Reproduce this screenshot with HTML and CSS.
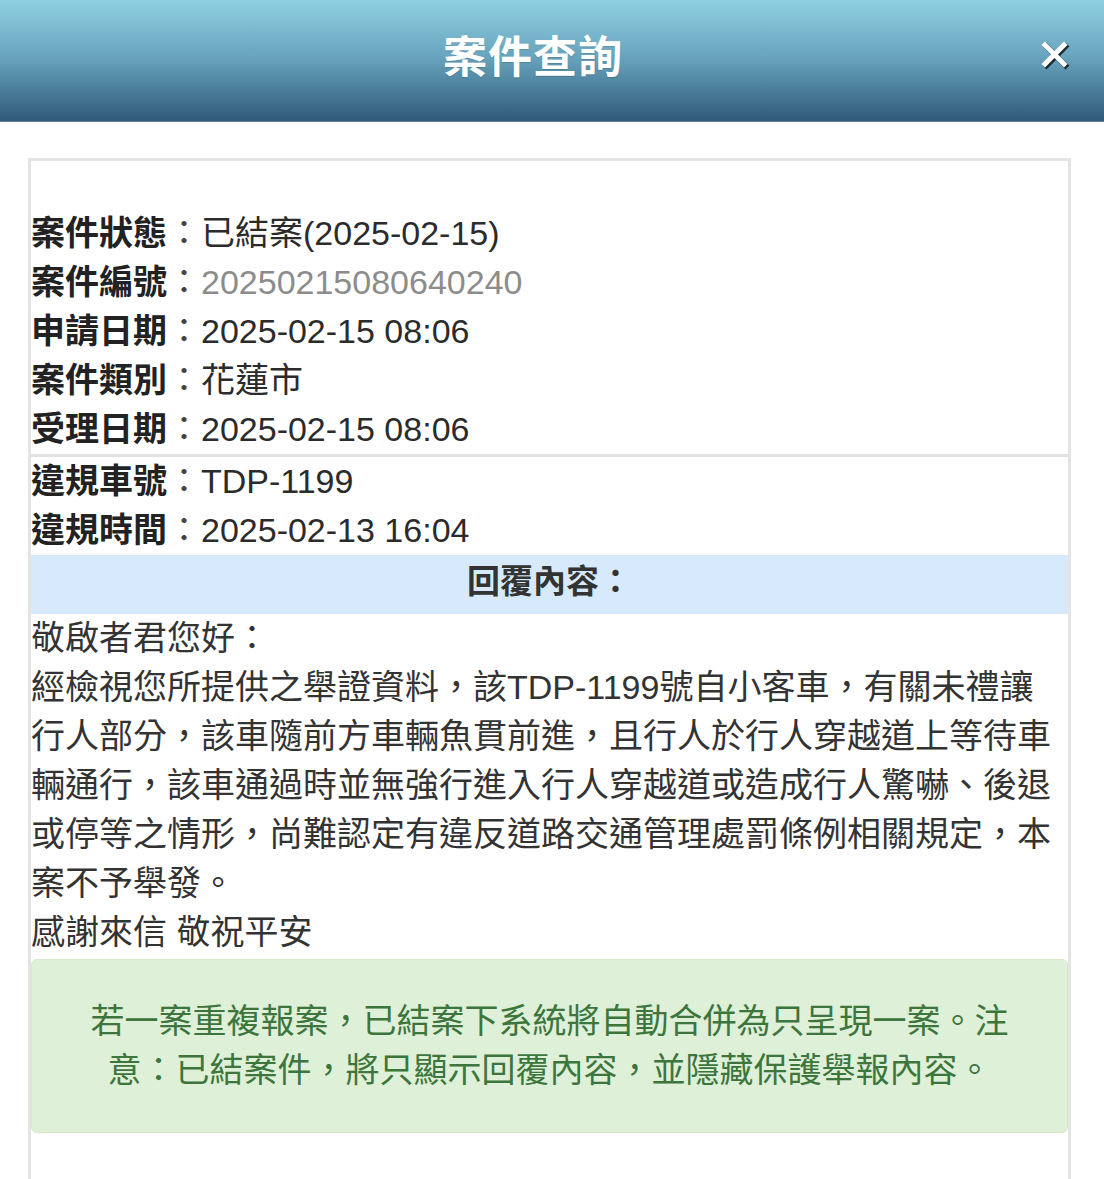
FILE: index.html
```html
<!DOCTYPE html>
<html lang="zh-Hant">
<head>
<meta charset="utf-8">
<title>案件查詢</title>
<link rel="stylesheet" href="styles.css">
</head>
<body>
<header class="topbar">
  <h1 class="title">案件查詢</h1>
  <button class="close" aria-label="關閉">
    <svg width="30" height="30" viewBox="0 0 30 30">
      <g stroke="#1c2a33" stroke-width="5.5" stroke-linecap="square">
        <line x1="5.5" y1="5.5" x2="24.5" y2="24.5"/>
        <line x1="24.5" y1="5.5" x2="5.5" y2="24.5"/>
      </g>
      <g stroke="#ffffff" stroke-width="5" stroke-linecap="square">
        <line x1="4" y1="4" x2="23" y2="23"/>
        <line x1="23" y1="4" x2="4" y2="23"/>
      </g>
    </svg>
  </button>
</header>
<main class="page">
  <section class="card">
    <div class="info">
      <div class="row"><span class="label">案件狀態</span><span class="colon">：</span><span class="value">已結案(2025-02-15)</span></div>
      <div class="row"><span class="label">案件編號</span><span class="colon">：</span><span class="value muted">20250215080640240</span></div>
      <div class="row"><span class="label">申請日期</span><span class="colon">：</span><span class="value">2025-02-15 08:06</span></div>
      <div class="row"><span class="label">案件類別</span><span class="colon">：</span><span class="value">花蓮市</span></div>
      <div class="row"><span class="label">受理日期</span><span class="colon">：</span><span class="value">2025-02-15 08:06</span></div>
    </div>
    <div class="info sep">
      <div class="row"><span class="label">違規車號</span><span class="colon">：</span><span class="value">TDP-1199</span></div>
      <div class="row"><span class="label">違規時間</span><span class="colon">：</span><span class="value">2025-02-13 16:04</span></div>
    </div>
    <div class="band">回覆內容：</div>
    <div class="reply">
      <p>敬啟者君您好：</p>
      <p>經檢視您所提供之舉證資料，該TDP-1199號自小客車，有關未禮讓行人部分，該車隨前方車輛魚貫前進，且行人於行人穿越道上等待車輛通行，該車通過時並無強行進入行人穿越道或造成行人驚嚇、後退或停等之情形，尚難認定有違反道路交通管理處罰條例相關規定，本案不予舉發。</p>
      <p>感謝來信 敬祝平安</p>
    </div>
    <div class="notice">若一案重複報案，已結案下系統將自動合併為只呈現一案。注意：已結案件，將只顯示回覆內容，並隱藏保護舉報內容。</div>
  </section>
</main>
</body>
</html>
```
FILE: styles.css
```css
* { box-sizing: border-box; }
html, body {
  margin: 0;
  padding: 0;
  background: #ffffff;
}
body {
  font-family: "Liberation Sans", "Noto Sans CJK TC", sans-serif;
  color: #333333;
  overflow: hidden;
}
.topbar {
  position: relative;
  height: 122px;
  background: linear-gradient(to bottom, #8fd0e2 0%, #6aa6bf 45%, #2f5a78 100%);
  border-bottom: 1px solid #5d8298;
  display: flex;
  align-items: center;
  justify-content: center;
}
.title {
  margin: 0 38px 6px 0;
  font-size: 44px;
  font-weight: 700;
  color: #ffffff;
  letter-spacing: 1px;
  line-height: 1;
  text-shadow: 0 1px 1px rgba(0,0,0,0.15);
}
.close {
  position: absolute;
  right: 33px;
  top: 41px;
  width: 30px;
  height: 30px;
  padding: 0;
  border: 0;
  background: transparent;
}
.close svg { display: block; }
.page {
  padding: 36px 33px 0 28px;
}
.card {
  border: 3px solid #e4e4e4;
  border-bottom: 0;
  padding-top: 48px;
  min-height: 1100px;
}
.info {
  font-size: 34px;
  line-height: 49px;
}
.sep {
  border-top: 3px solid #e2e2e2;
}
.row {
  display: flex;
  white-space: nowrap;
}
.label {
  font-weight: 700;
  color: #222222;
}
.colon {
  color: #444444;
}
.value { color: #2b2b2b; }
.muted { color: #8c8c8c; }
.band {
  background: #d6eafb;
  height: 59px;
  line-height: 54px;
  text-align: center;
  font-size: 33px;
  font-weight: 700;
  color: #333333;
}
.reply {
  font-size: 34px;
  line-height: 49px;
  color: #333333;
  padding-right: 6px;
}
.reply p { margin: 0; }
.notice {
  margin: 2px 0 0 0;
  background: #dff0d8;
  border: 1px solid #d6e9c6;
  border-radius: 6px;
  color: #3c763d;
  font-size: 34px;
  line-height: 49px;
  text-align: center;
  padding: 37px 45px;
}
```
